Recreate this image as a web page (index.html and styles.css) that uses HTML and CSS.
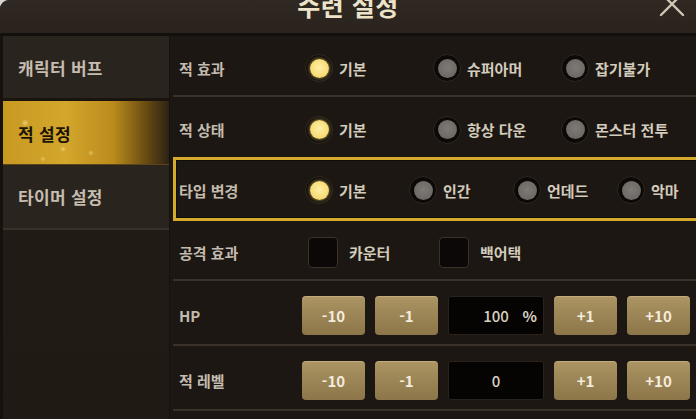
FILE: index.html
```html
<!DOCTYPE html>
<html lang="ko">
<head>
<meta charset="utf-8">
<title>수련 설정</title>
<link rel="stylesheet" href="styles.css">
</head>
<body>
<div class="app">
  <header class="header">
    <h1 class="title">수련 설정</h1>
    <button class="close" aria-label="닫기">
      <svg width="26" height="26" viewBox="0 0 26 26"><path d="M2 2 L24 24 M24 2 L2 24" stroke="#cfc7b6" stroke-width="2.4" stroke-linecap="round" fill="none"/></svg>
    </button>
  </header>
  <div class="main">
    <nav class="sidebar">
      <div class="nav-item nav-first">캐릭터 버프</div>
      <div class="nav-item nav-active">적 설정</div>
      <div class="nav-item nav-last">타이머 설정</div>
    </nav>
    <section class="content">
      <div class="row row-1">
        <span class="label">적 효과</span>
        <div class="options">
          <label class="opt"><span class="radio on"></span>기본</label>
          <label class="opt"><span class="radio"></span>슈퍼아머</label>
          <label class="opt"><span class="radio"></span>잡기불가</label>
        </div>
      </div>
      <div class="row row-2">
        <span class="label">적 상태</span>
        <div class="options">
          <label class="opt"><span class="radio on"></span>기본</label>
          <label class="opt"><span class="radio"></span>항상 다운</label>
          <label class="opt"><span class="radio"></span>몬스터 전투</label>
        </div>
      </div>
      <div class="row row-3 highlight">
        <span class="label">타입 변경</span>
        <div class="options options-4">
          <label class="opt"><span class="radio on"></span>기본</label>
          <label class="opt"><span class="radio"></span>인간</label>
          <label class="opt"><span class="radio"></span>언데드</label>
          <label class="opt"><span class="radio"></span>악마</label>
        </div>
      </div>
      <div class="row row-4">
        <span class="label">공격 효과</span>
        <div class="options options-check">
          <label class="opt opt-check"><span class="check"></span>카운터</label>
          <label class="opt opt-check"><span class="check"></span>백어택</label>
        </div>
      </div>
      <div class="row row-5">
        <span class="label">HP</span>
        <div class="stepper">
          <button class="btn">-10</button>
          <button class="btn">-1</button>
          <div class="value-box"><span class="value">100</span><span class="unit">%</span></div>
          <button class="btn">+1</button>
          <button class="btn">+10</button>
        </div>
      </div>
      <div class="row row-6">
        <span class="label">적 레벨</span>
        <div class="stepper">
          <button class="btn">-10</button>
          <button class="btn">-1</button>
          <div class="value-box"><span class="value">0</span></div>
          <button class="btn">+1</button>
          <button class="btn">+10</button>
        </div>
      </div>
    </section>
  </div>
</div>
</body>
</html>
```

FILE: styles.css
```css
* { box-sizing: border-box; }
html, body {
  margin: 0;
  padding: 0;
  background: #d9d6d2;
  width: 696px;
  height: 419px;
  overflow: hidden;
}
body {
  font-family: "Noto Sans CJK KR", "Noto Sans", sans-serif;
  font-weight: 700;
}
.app {
  width: 696px;
  height: 419px;
  display: flex;
  flex-direction: column;
  background: #1c1713;
  border-top-left-radius: 9px;
  overflow: hidden;
}
.header {
  position: relative;
  height: 36px;
  flex: none;
  display: flex;
  justify-content: center;
  align-items: flex-start;
  background: linear-gradient(180deg, #302923 0%, #2b241e 85%);
  border-bottom: 3px solid #130f0c;
}
.title {
  margin: -7px 0 0 0;
  font-size: 25px;
  line-height: 25px;
  font-weight: 700;
  color: #ece3c9;
  letter-spacing: 0.5px;
}
.close {
  position: absolute;
  left: 659px;
  top: -9px;
  padding: 0;
  border: 0;
  background: none;
  width: 26px;
  height: 26px;
}
.close svg { display: block; }
.main {
  flex: 1;
  display: flex;
  min-height: 0;
}
.sidebar {
  width: 170px;
  flex: none;
  display: flex;
  flex-direction: column;
  background: linear-gradient(180deg, #231d18 0%, #201a15 100%);
  border-left: 3px solid #16110d;
  border-right: 1px solid #17120e;
}
.nav-item {
  display: flex;
  align-items: center;
  padding-left: 15px;
  font-size: 17px;
  color: #c6bdaf;
  background: #2a241f;
  letter-spacing: 0.3px;
}
.nav-first { height: 62px; }
.nav-active {
  height: 67px;
  padding-top: 2px;
  color: #1b1306;
  border-top: 3px solid #1a140f;
  border-bottom: 1px solid #5a4418;
  background:
    radial-gradient(circle at 22px 22px, rgba(255,240,170,0.55) 0, rgba(255,240,170,0) 4px),
    radial-gradient(circle at 60px 48px, rgba(255,240,170,0.5) 0, rgba(255,240,170,0) 3px),
    radial-gradient(circle at 88px 52px, rgba(255,240,170,0.45) 0, rgba(255,240,170,0) 3px),
    radial-gradient(circle at 40px 58px, rgba(255,240,170,0.4) 0, rgba(255,240,170,0) 3px),
    linear-gradient(90deg, #c89a22 0%, #d3a62c 38%, #bb8c1c 66%, #6a4c12 86%, #2c2215 100%);
}
.nav-last {
  height: 65px;
  border-bottom: 2px solid #3a322a;
}
.content {
  flex: 1;
  display: flex;
  flex-direction: column;
  padding-left: 3px;
}
.row {
  display: flex;
  align-items: center;
  padding-left: 6px;
  padding-top: 5px;
  border-bottom: 2px solid #3a3129;
}
.row-1 { height: 61px; }
.row-2 { height: 60px; border-bottom: 0; }
.row-3 { height: 64px; }
.row-4 { height: 60px; }
.row-5 { height: 65px; }
.row-6 { height: 65px; }
.highlight {
  border: 3px solid #d6ab2c;
  padding-left: 3px;
  padding-top: 2px;
  margin-right: 2px;
  box-shadow: inset 0 0 0 1px rgba(0,0,0,0.45);
}
.label {
  width: 126px;
  flex: none;
  font-size: 15px;
  color: #c3bbae;
}
.options {
  display: flex;
  align-items: center;
}
.opt {
  width: 128px;
  display: flex;
  align-items: center;
  gap: 6px;
  font-size: 15px;
  color: #d3cbbb;
}
.options-4 .opt { width: 104px; }
.radio {
  width: 28px;
  height: 28px;
  border-radius: 50%;
  background: #0c0907;
  border: 1px solid #2f2721;
  display: flex;
  align-items: center;
  justify-content: center;
  flex: none;
}
.radio::after {
  content: "";
  width: 19px;
  height: 19px;
  border-radius: 50%;
  background: radial-gradient(circle at 50% 45%, #7d7974 0%, #6d6964 70%, #5d5954 100%);
}
.radio.on::after {
  background: radial-gradient(circle at 50% 45%, #fff0a6 0%, #f8dc78 60%, #e9c456 100%);
  box-shadow: 0 0 4px rgba(255, 220, 110, 0.8);
}
.options-check { margin-left: 3px; }
.opt-check { width: 131px; gap: 11px; }
.check {
  width: 30px;
  height: 31px;
  flex: none;
  border-radius: 4px;
  background: #0b0807;
  border: 1px solid #3b322a;
}
.stepper {
  display: flex;
  align-items: center;
  gap: 10px;
  margin-left: -3px;
}
.btn {
  width: 63px;
  height: 39px;
  border: 0;
  border-radius: 4px;
  background: linear-gradient(180deg, #ad9664 0%, #9a8354 55%, #8c7548 100%);
  box-shadow: inset 0 1px 0 rgba(255,240,200,0.25);
  color: #f4ecdc;
  font-family: "Noto Sans CJK KR", "Noto Sans", sans-serif;
  font-weight: 700;
  font-size: 15px;
  padding: 0;
}
.value-box {
  width: 96px;
  height: 39px;
  border-radius: 3px;
  background: #050403;
  border: 1px solid #2a231d;
  display: grid;
  grid-template-columns: 1fr auto 1fr;
  align-items: center;
  font-size: 15px;
  font-weight: 500;
  color: #d9d1c1;
}
.value { grid-column: 2; }
.unit {
  grid-column: 3;
  justify-self: end;
  padding-right: 6px;
  font-weight: 700;
}
```
